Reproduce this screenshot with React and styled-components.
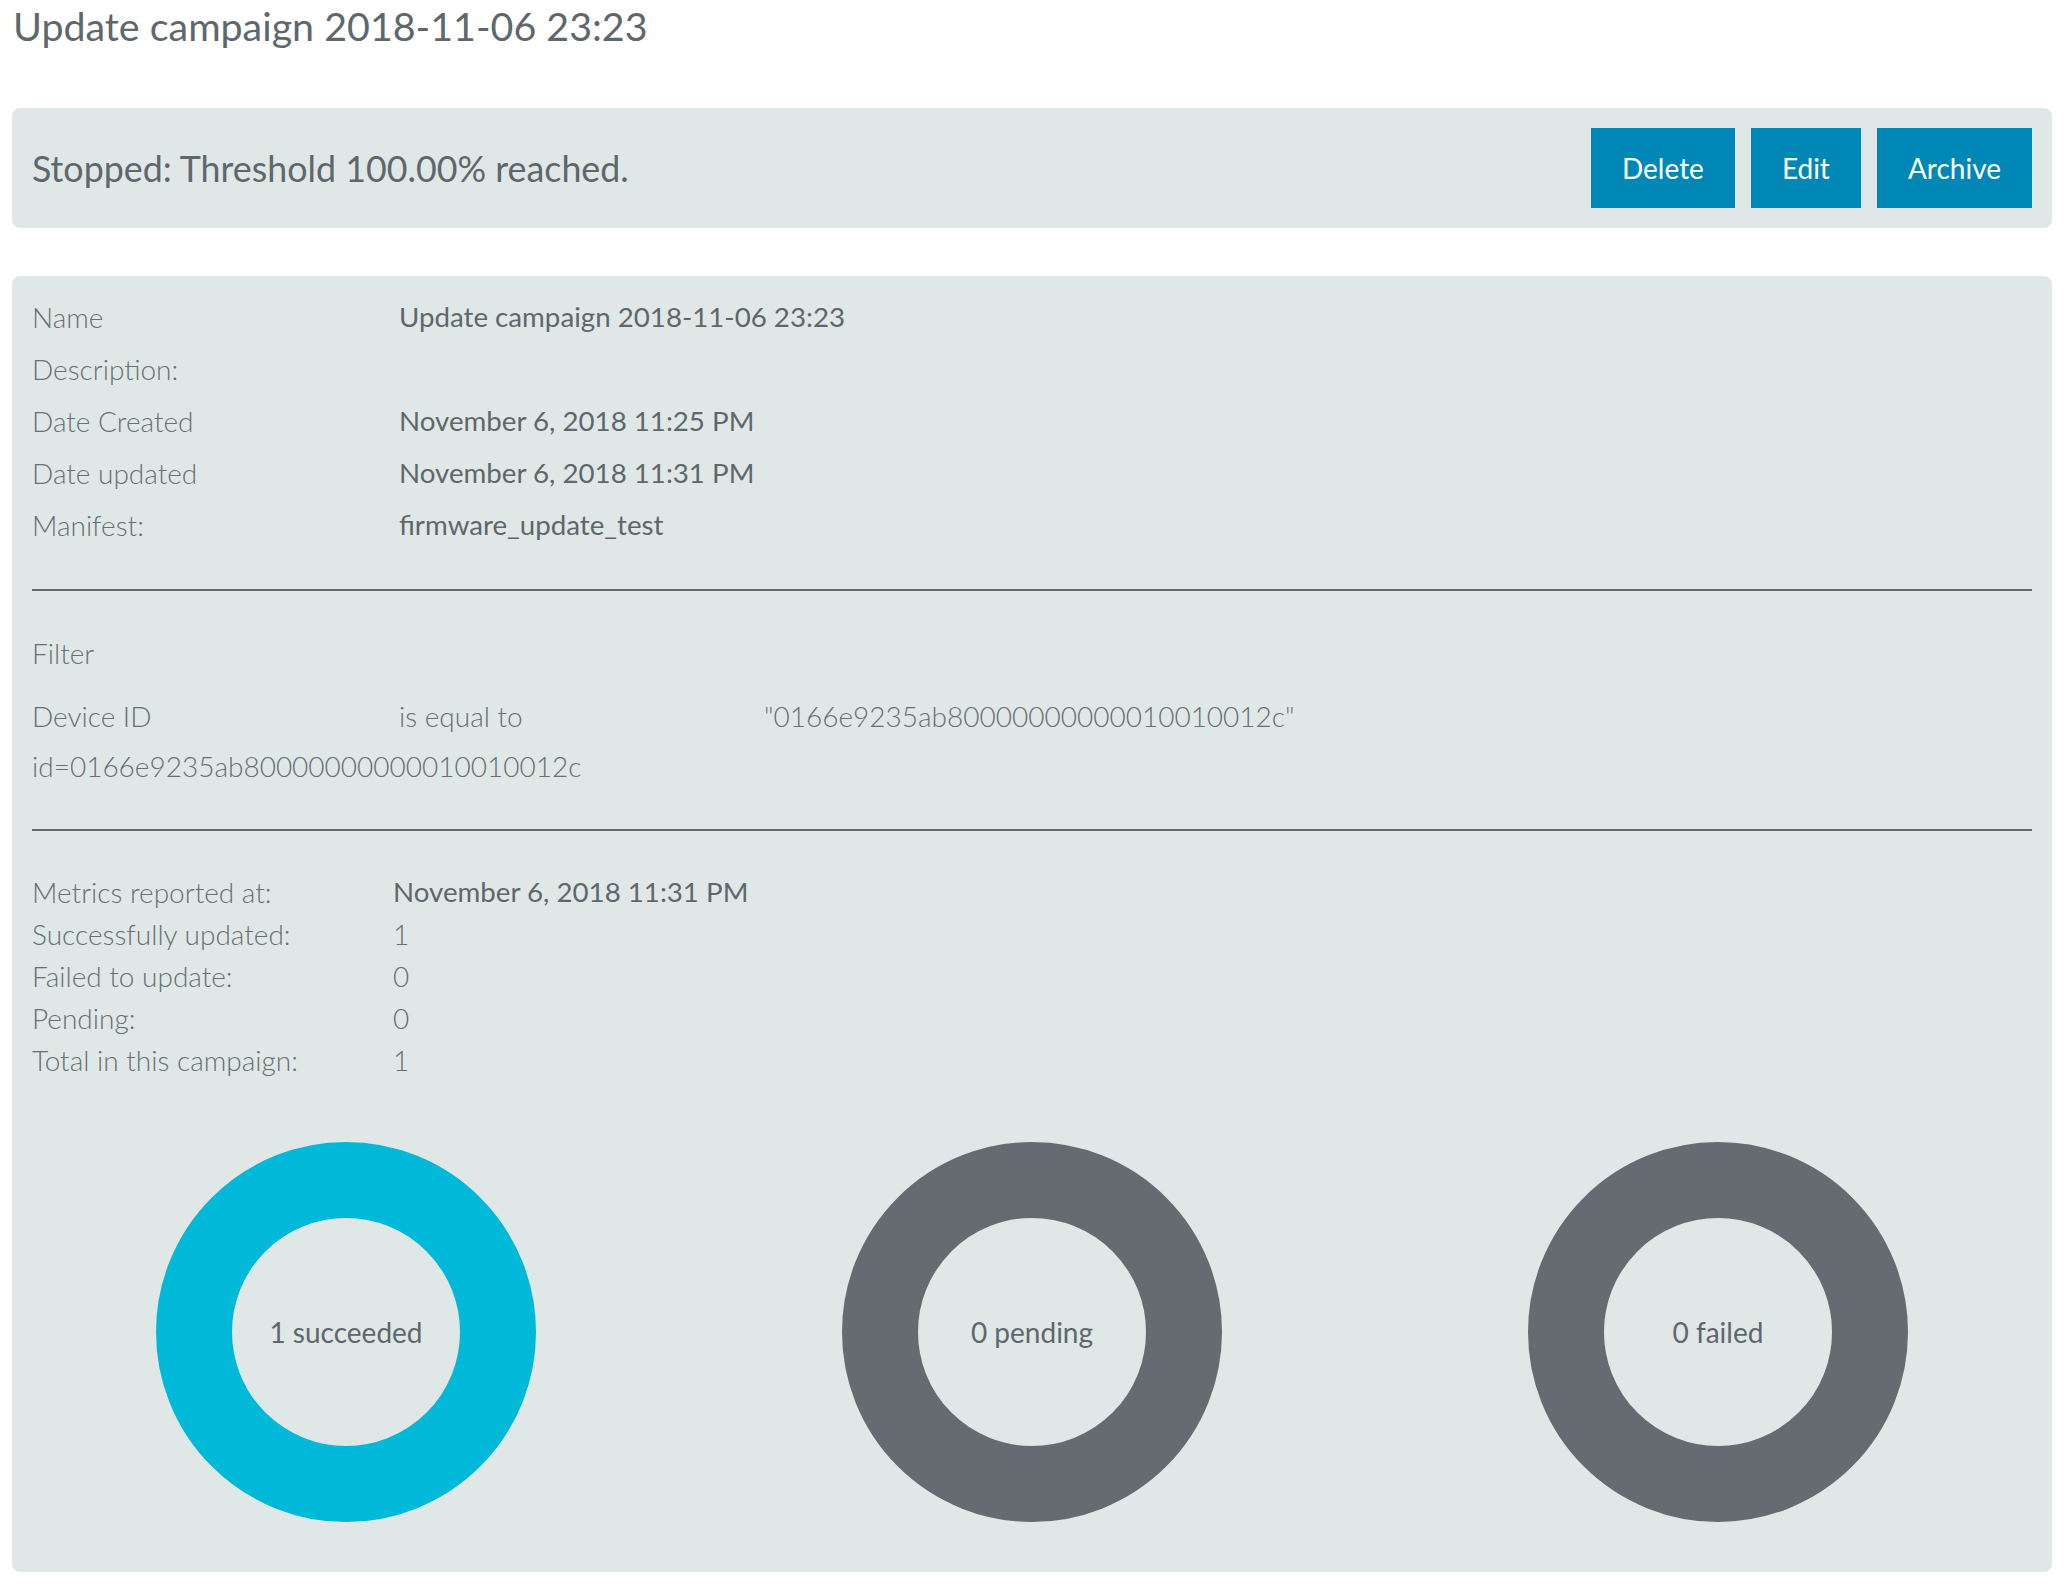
import React from 'react'
import styled, { createGlobalStyle } from 'styled-components'

const GlobalStyle = createGlobalStyle`
  body {
    margin: 0;
    background: #ffffff;
    font-family: Lato, "Open Sans", sans-serif;
    color: #5e676c;
  }
`

const details = [
    { label: 'Name', value: 'Update campaign 2018-11-06 23:23' },
    { label: 'Description:', value: '' },
    { label: 'Date Created', value: 'November 6, 2018 11:25 PM' },
    { label: 'Date updated', value: 'November 6, 2018 11:31 PM' },
    { label: 'Manifest:', value: 'firmware_update_test' },
]

const metrics = [
    { label: 'Metrics reported at:', value: 'November 6, 2018 11:31 PM', strong: true },
    { label: 'Successfully updated:', value: '1' },
    { label: 'Failed to update:', value: '0' },
    { label: 'Pending:', value: '0' },
    { label: 'Total in this campaign:', value: '1' },
]

const charts = [
    { text: '1 succeeded', color: '#00b8d7' },
    { text: '0 pending', color: '#656c71' },
    { text: '0 failed', color: '#656c71' },
]

export default function App() {
    return (
        <>
            <GlobalStyle />
            <Page>
                <Title>Update campaign 2018-11-06 23:23</Title>

                <StatusBar>
                    <StatusText>Stopped: Threshold 100.00% reached.</StatusText>
                    <ButtonGroup>
                        <Button>Delete</Button>
                        <Button>Edit</Button>
                        <Button>Archive</Button>
                    </ButtonGroup>
                </StatusBar>

                <DetailsPanel>
                    <InfoList>
                        {details.map((row) => (
                            <React.Fragment key={row.label}>
                                <Label>{row.label}</Label>
                                <Value>{row.value}</Value>
                            </React.Fragment>
                        ))}
                    </InfoList>

                    <Divider $top={43} />

                    <FilterSection>
                        <Label>Filter</Label>
                        <FilterRow>
                            <Label>Device ID</Label>
                            <Label>is equal to</Label>
                            <Label>"0166e9235ab80000000000010010012c"</Label>
                        </FilterRow>
                        <Query>id=0166e9235ab80000000000010010012c</Query>
                    </FilterSection>

                    <Divider $top={42} />

                    <MetricsList>
                        {metrics.map((row) => (
                            <React.Fragment key={row.label}>
                                <Label>{row.label}</Label>
                                {row.strong ? <Value>{row.value}</Value> : <Label>{row.value}</Label>}
                            </React.Fragment>
                        ))}
                    </MetricsList>

                    <Charts>
                        {charts.map((c) => (
                            <Donut key={c.text} $color={c.color}>
                                <DonutLabel>{c.text}</DonutLabel>
                            </Donut>
                        ))}
                    </Charts>
                </DetailsPanel>
            </Page>
        </>
    )
}

const Page = styled.div`
  padding: 2px 20px 22px 12px;
`

const Title = styled.h1`
  margin: 0;
  padding-left: 1px;
  font-size: 39.4px;
  line-height: 48px;
  font-weight: 400;
  color: #5e676c;
`

const Panel = styled.div`
  background: #e0e8e7;
  border-radius: 8px;
`

const StatusBar = styled(Panel)`
  margin-top: 58px;
  padding: 20px;
  display: flex;
  align-items: center;
  justify-content: space-between;
`

const StatusText = styled.div`
  font-size: 35.8px;
  line-height: 43px;
  color: #5e676c;
`

const ButtonGroup = styled.div`
  display: flex;
  gap: 16px;
`

const Button = styled.button`
  height: 80px;
  padding: 0 31px;
  border: none;
  border-radius: 0;
  background: #0087b5;
  color: #ffffff;
  font-family: Lato, sans-serif;
  font-size: 28px;
  cursor: pointer;
`

const DetailsPanel = styled(Panel)`
  margin-top: 48px;
  padding: 20px 20px 50px;
`

const InfoList = styled.div`
  display: grid;
  grid-template-columns: 367px 1fr;
  row-gap: 10px;
`

const Label = styled.div`
  font-family: "Lato Light", Lato, sans-serif;
  font-size: 28px;
  line-height: 42px;
  font-weight: 300;
  color: #667075;
  white-space: nowrap;
`

const Value = styled.div`
  font-size: 27.7px;
  line-height: 42px;
  font-weight: 400;
  color: #5e676c;
  min-height: 42px;
`

const Divider = styled.hr`
  margin: ${(p) => p.$top}px 0 0;
  border: none;
  height: 2px;
  background: #646c70;
`

const FilterSection = styled.div`
  margin-top: 41px;
`

const FilterRow = styled.div`
  margin-top: 21px;
  display: grid;
  grid-template-columns: 367px 365px 1fr;
`

const Query = styled(Label)`
  margin-top: 8px;
`

const MetricsList = styled.div`
  margin-top: 40px;
  display: grid;
  grid-template-columns: 361px 1fr;
`

const Charts = styled.div`
  margin-top: 61px;
  padding: 0 124px;
  display: flex;
  justify-content: space-between;
`

const Donut = styled.div`
  box-sizing: border-box;
  width: 380px;
  height: 380px;
  border-radius: 50%;
  border: 76px solid ${(p) => p.$color};
  display: flex;
  align-items: center;
  justify-content: center;
`

const DonutLabel = styled.span`
  font-size: 28px;
  color: #5e676c;
`
